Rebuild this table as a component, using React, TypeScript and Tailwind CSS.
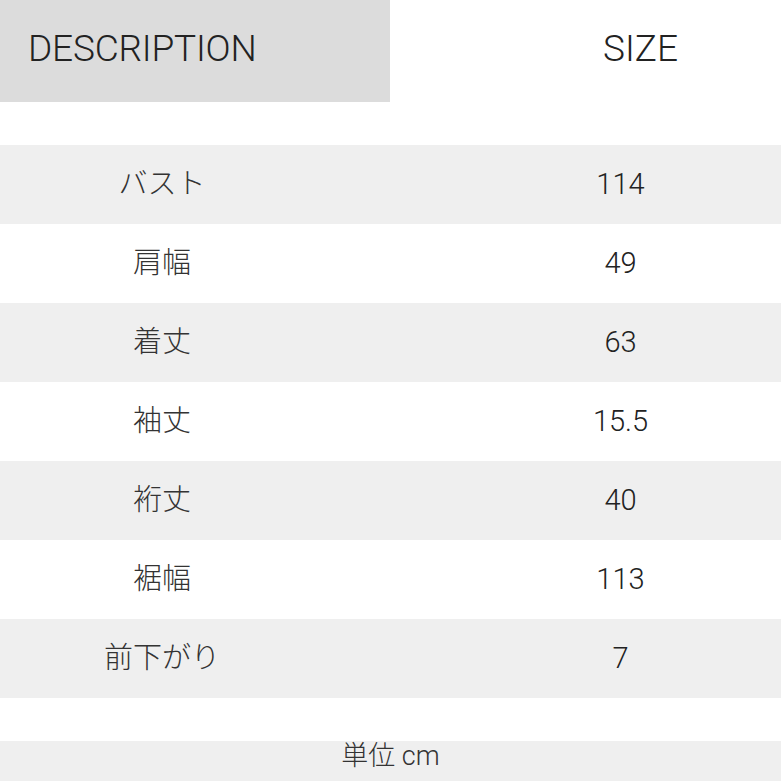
const rows: [string, string][] = [
  ["バスト", "114"],
  ["肩幅", "49"],
  ["着丈", "63"],
  ["袖丈", "15.5"],
  ["裄丈", "40"],
  ["裾幅", "113"],
  ["前下がり", "7"],
];

const font = {
  fontFamily: 'Roboto, "Noto Sans CJK JP", sans-serif',
};

export default function App() {
  return (
    <div className="w-[781px] h-[781px] overflow-hidden bg-white text-[#222]" style={font}>
      <div className="flex h-[102px]">
        <div className="w-[390px] bg-[#dcdcdc] flex items-center pl-[28px] pb-[4px]">
          <span className="text-[37px] font-light tracking-[-0.2px]">DESCRIPTION</span>
        </div>
        <div className="flex-1 flex items-center justify-center pl-[110px] pb-[4px]">
          <span className="text-[37px] font-light">SIZE</span>
        </div>
      </div>

      <div className="mt-[43px] flex flex-col">
        {rows.map(([label, value], i) => (
          <div
            key={label}
            className={`flex h-[79px] items-center ${i % 2 === 0 ? "bg-[#efefef]" : "bg-white"}`}
          >
            <div className="w-[324px] text-center text-[29px] font-light text-[#333]">{label}</div>
            <div className="flex-1 pl-[136px] text-center text-[29px] font-light">{value}</div>
          </div>
        ))}
      </div>

      <div className="mt-[43px] h-[41px] bg-[#efefef] flex justify-center">
        <span className="text-[27px] font-light leading-[30px] text-[#333]">単位 cm</span>
      </div>
    </div>
  );
}
